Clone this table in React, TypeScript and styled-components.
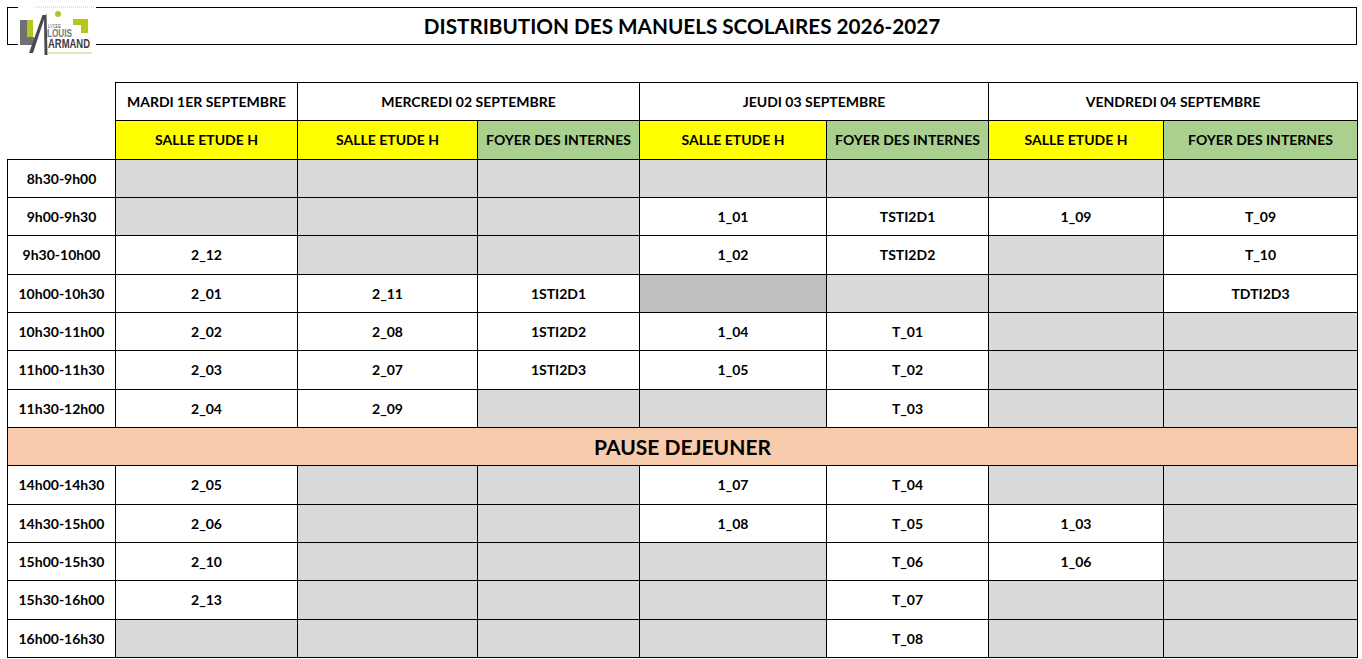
import styled, { createGlobalStyle } from "styled-components";

const GlobalStyle = createGlobalStyle`
  html, body {
    margin: 0;
    padding: 0;
    background: #fff;
  }
  body {
    font-family: Lato, "Liberation Sans", sans-serif;
    color: #000;
  }
`;

const Page = styled.div`
  padding: 7px 5px 0 7px;
  width: 1350px;
`;

const TitleBar = styled.div`
  position: relative;
  height: 36px;
  border: 1px solid #000;
  display: flex;
  align-items: center;
  justify-content: center;
`;

const Title = styled.h1`
  margin: 0;
  font-size: 20.7px;
  font-weight: 700;
`;

const LogoBox = styled.div`
  position: absolute;
  left: 7px;
  top: -6px;
  width: 85px;
  height: 60px;
  line-height: 0;
`;

const Table = styled.table`
  margin-top: 37px;
  width: 1350px;
  table-layout: fixed;
  border-collapse: collapse;
`;

const Cell = styled.td<{ $bg?: string }>`
  height: 37.33px;
  padding: 0;
  border: 1px solid #000;
  background: ${(p) => p.$bg ?? "#fff"};
  text-align: center;
  vertical-align: middle;
  font-size: 14px;
  font-weight: 700;
  white-space: nowrap;
`;

const Corner = styled.td`
  border: none;
  padding: 0;
`;

const PauseCell = styled.td`
  height: 37.33px;
  padding: 0;
  border: 1px solid #000;
  background: #f8cbad;
  text-align: center;
  font-size: 21px;
  font-weight: 700;
`;

const GREY = "#d9d9d9";
const DARK = "#bfbfbf";
const YELLOW = "#ffff00";
const GREEN = "#a9d08e";

const widths = [108, 182, 180, 162, 187, 162, 175, 194];

const days: [string, number][] = [
  ["MARDI 1ER SEPTEMBRE", 1],
  ["MERCREDI 02 SEPTEMBRE", 2],
  ["JEUDI 03 SEPTEMBRE", 2],
  ["VENDREDI 04 SEPTEMBRE", 2],
];

const rooms: [string, string][] = [
  ["SALLE ETUDE H", YELLOW],
  ["SALLE ETUDE H", YELLOW],
  ["FOYER DES INTERNES", GREEN],
  ["SALLE ETUDE H", YELLOW],
  ["FOYER DES INTERNES", GREEN],
  ["SALLE ETUDE H", YELLOW],
  ["FOYER DES INTERNES", GREEN],
];

// "" = grey slot, "#" = darker grey slot
const morning: [string, string[]][] = [
  ["8h30-9h00", ["", "", "", "", "", "", ""]],
  ["9h00-9h30", ["", "", "", "1_01", "TSTI2D1", "1_09", "T_09"]],
  ["9h30-10h00", ["2_12", "", "", "1_02", "TSTI2D2", "", "T_10"]],
  ["10h00-10h30", ["2_01", "2_11", "1STI2D1", "#", "", "", "TDTI2D3"]],
  ["10h30-11h00", ["2_02", "2_08", "1STI2D2", "1_04", "T_01", "", ""]],
  ["11h00-11h30", ["2_03", "2_07", "1STI2D3", "1_05", "T_02", "", ""]],
  ["11h30-12h00", ["2_04", "2_09", "", "", "T_03", "", ""]],
];

const afternoon: [string, string[]][] = [
  ["14h00-14h30", ["2_05", "", "", "1_07", "T_04", "", ""]],
  ["14h30-15h00", ["2_06", "", "", "1_08", "T_05", "1_03", ""]],
  ["15h00-15h30", ["2_10", "", "", "", "T_06", "1_06", ""]],
  ["15h30-16h00", ["2_13", "", "", "", "T_07", "", ""]],
  ["16h00-16h30", ["", "", "", "", "T_08", "", ""]],
];

const Logo = () => (
  <svg width="85" height="60" viewBox="0 0 85 60">
    <rect x="3" y="3" width="78" height="53" fill="#fff" />
    <line x1="20" y1="5" x2="80" y2="5" stroke="#e2e2e2" strokeWidth="2" strokeDasharray="1 1" />
    <rect x="12" y="18" width="6" height="18" fill="#b5c61d" />
    <path d="M5 18 H12 V35 H19 V43 H5 Z" fill="#707174" />
    <path d="M14 51 L27.5 13 L30.5 13 L18 51 Z" fill="#4a4a4c" />
    <path d="M29 14 L31.5 12 L32.5 53 L29.5 53 Z" fill="#4a4a4c" />
    <circle cx="43" cy="12" r="3" fill="#b5c61d" />
    <path d="M58 17 H73 V31 H66 V23 H58 Z" fill="#b5c61d" />
    <text x="33" y="25.5" fontSize="4.5" fill="#555" fontFamily="Liberation Sans, sans-serif" textLength="13" lengthAdjust="spacingAndGlyphs">LYCEE</text>
    <text x="32" y="34.5" fontSize="11" fontWeight="700" fill="#76777a" fontFamily="Liberation Sans, sans-serif" textLength="25" lengthAdjust="spacingAndGlyphs">LOUIS</text>
    <text x="33" y="46" fontSize="12" fontWeight="700" fill="#3c3c3e" fontFamily="Liberation Sans, sans-serif" textLength="42" lengthAdjust="spacingAndGlyphs">ARMAND</text>
    <line x1="33" y1="51" x2="77" y2="51" stroke="#d6e0a2" strokeWidth="1.5" />
  </svg>
);

const SlotRow = ({ time, slots }: { time: string; slots: string[] }) => (
  <tr>
    <Cell>{time}</Cell>
    {slots.map((s, i) => (
      <Cell key={i} $bg={s === "" ? GREY : s === "#" ? DARK : "#fff"}>
        {s === "#" ? "" : s}
      </Cell>
    ))}
  </tr>
);

export default function App() {
  return (
    <Page>
      <GlobalStyle />
      <TitleBar>
        <LogoBox>
          <Logo />
        </LogoBox>
        <Title>DISTRIBUTION DES MANUELS SCOLAIRES 2026-2027</Title>
      </TitleBar>

      <Table>
        <colgroup>
          {widths.map((w, i) => (
            <col key={i} style={{ width: w }} />
          ))}
        </colgroup>
        <tbody>
          <tr>
            <Corner rowSpan={2} />
            {days.map(([d, span]) => (
              <Cell key={d} colSpan={span}>
                {d}
              </Cell>
            ))}
          </tr>
          <tr>
            {rooms.map(([r, bg], i) => (
              <Cell key={i} $bg={bg}>
                {r}
              </Cell>
            ))}
          </tr>
          {morning.map(([t, s]) => (
            <SlotRow key={t} time={t} slots={s} />
          ))}
          <tr>
            <PauseCell colSpan={8}>PAUSE DEJEUNER</PauseCell>
          </tr>
          {afternoon.map(([t, s]) => (
            <SlotRow key={t} time={t} slots={s} />
          ))}
        </tbody>
      </Table>
    </Page>
  );
}
